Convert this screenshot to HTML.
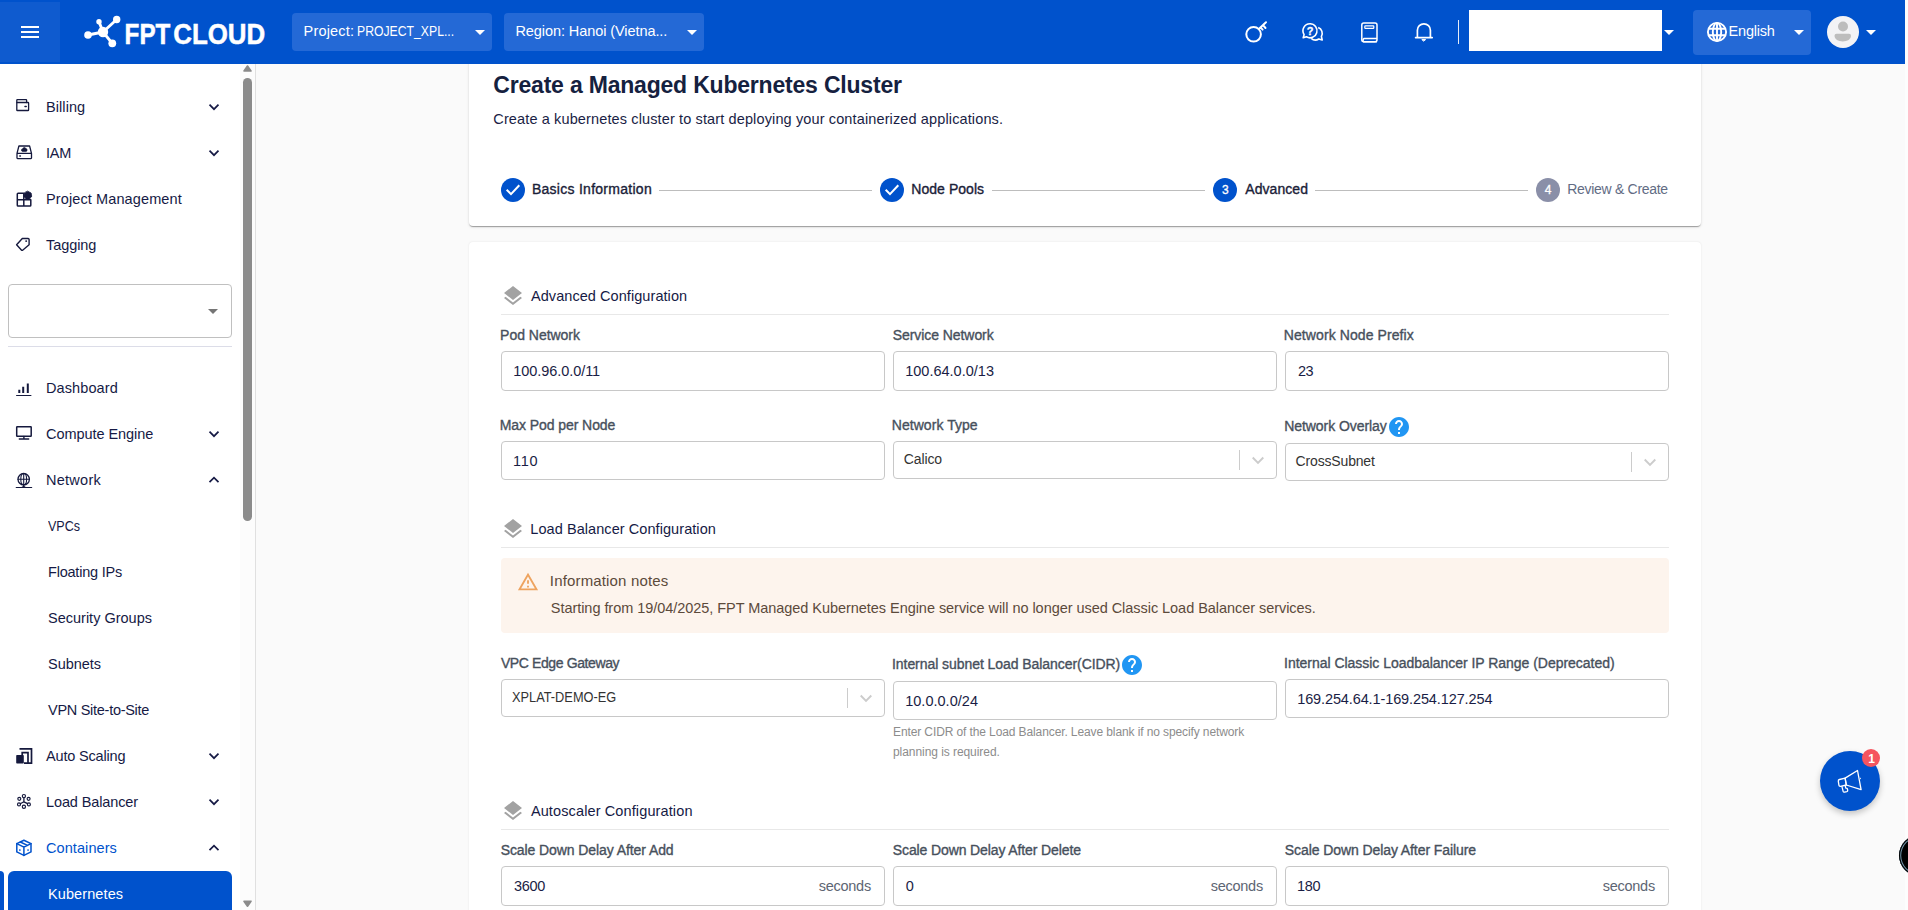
<!DOCTYPE html>
<html><head><meta charset="utf-8">
<style>
*{box-sizing:border-box;margin:0;padding:0}
html,body{width:1908px;height:910px;overflow:hidden;background:#fafafa;font-family:"Liberation Sans",sans-serif;color:#172b4d}
.abs{position:absolute}
.t{position:absolute;white-space:nowrap;line-height:1;z-index:20}
#hdr{z-index:10;position:absolute;left:0;top:0;width:1905px;height:64px;background:#0052cc}
#ham{position:absolute;left:0;top:2px;width:60px;height:60px;background:#0f5bcf}
.pill{position:absolute;top:13px;height:38px;width:200px;background:#2469d6;border-radius:4px}
.caret{position:absolute;width:0;height:0;border-left:5px solid transparent;border-right:5px solid transparent;border-top:5px solid #fff}
#side{position:absolute;left:0;top:64px;width:256px;height:846px;background:#fff;border-right:1px solid #e0e0e0}
.chev{position:absolute;left:208px;width:12px;height:12px}
.card{position:absolute;left:469px;width:1232px;background:#fff;border-radius:4px}
.inp{position:absolute;width:384px;height:40px;border:1px solid #c8c8c8;border-radius:4px;background:#fff}
.hr{position:absolute;left:501px;width:1168px;height:1px;background:#e8e8e8}
.sep{position:absolute;width:1px;height:20px;background:#ccc}
.step{position:absolute;width:24px;height:24px;border-radius:50%;top:178px}
.ln{position:absolute;top:190px;height:1px;background:#bdbdbd}
</style></head><body>
<div id="hdr">
 <div id="ham"><svg class="abs" style="left:18px;top:18px" width="24" height="24" viewBox="0 0 24 24"><path d="M3 6h18v2H3zM3 11h18v2H3zM3 16h18v2H3z" fill="#fff"/></svg></div>
 <svg class="abs" style="left:80px;top:10px" width="190" height="44" viewBox="80 10 190 44">
  <g stroke="#fff" stroke-width="2.900" stroke-linecap="round"><path d="M103 32L116.7 19.5M103 32L99 21.7M103 32L88 35M103 32L112.3 43.3"/></g>
  <g fill="#fff"><circle cx="103" cy="32" r="5.200"/><circle cx="116.7" cy="19.5" r="3.7"/><circle cx="99" cy="21.7" r="2.7"/><circle cx="88" cy="35" r="3.8"/><circle cx="112.3" cy="43.3" r="3.9"/></g>
  <text x="124.6" y="44" font-family="Liberation Sans, sans-serif" font-weight="bold" font-size="29" fill="#fff" stroke="#fff" stroke-width=".5" textLength="45.800" lengthAdjust="spacingAndGlyphs">FPT</text>
  <text x="173.2" y="44" font-family="Liberation Sans, sans-serif" font-weight="bold" font-size="29" fill="#fff" stroke="#fff" stroke-width=".5" textLength="92" lengthAdjust="spacingAndGlyphs">CLOUD</text>
 </svg>
 <div class="pill" style="left:292px"><i class="caret" style="left:183px;top:17px"></i></div>
 <div class="pill" style="left:504px"><i class="caret" style="left:183px;top:17px"></i></div>
 <!-- key -->
 <svg class="abs" style="left:1243px;top:19px" width="26" height="26" viewBox="1243 19 26 26" fill="none" stroke="#fff" stroke-width="2" stroke-linecap="round"><circle cx="1253.6" cy="34.3" r="7.3"/><path d="M1258.8 29L1266 22.3M1263 25.2L1265.5 28M1260.6 27.4L1262.6 29.6" /></svg>
 <!-- chat -->
 <svg class="abs" style="left:1300px;top:20px" width="26" height="24" viewBox="1300 20 26 24" fill="none" stroke="#fff" stroke-width="1.6" stroke-linejoin="round"><path d="M1310 23.8a7 7 0 1 1 -3.6 13l-3.2 .9l.9-3.1a7 7 0 0 1 5.9-10.8z"/><path d="M1318.2 27.6a6.2 6.2 0 0 1 3.2 8.9l.8 3.4l-3.4-.9a6.2 6.2 0 0 1-7.6-.6"/><text x="1310" y="35" text-anchor="middle" font-family="Liberation Sans, sans-serif" font-weight="bold" font-size="11" fill="#fff" stroke="#fff" stroke-width=".3">?</text></svg>
 <!-- book -->
 <svg class="abs" style="left:1359px;top:20px" width="22" height="24" viewBox="1359 20 22 24" fill="none" stroke="#fff" stroke-width="1.5" stroke-linejoin="round"><path d="M1377 38.6h-13.2a2 2 0 0 0 0 3.2h13.2"/><rect x="1361.8" y="23" width="15.2" height="18.8" rx="2"/><rect x="1364.800" y="25.800" width="9" height="2.600" rx=".6" stroke-width="1.200"/></svg>
 <!-- bell -->
 <svg class="abs" style="left:1412px;top:20px" width="24" height="24" viewBox="1412 20 24 24" fill="none" stroke="#fff" stroke-width="1.7" stroke-linejoin="round" stroke-linecap="round"><path d="M1415.6 37.6h16.6M1417.4 37.6v-7.3a6.5 6.5 0 0 1 13 0v7.3"/><path d="M1422.2 39.6h3.4l-1.7 1.3z" fill="#fff" stroke-width="1"/></svg>
 <div class="abs" style="left:1458px;top:20px;width:1px;height:24px;background:#e6ecf8"></div>
 <div class="abs" style="left:1469px;top:10px;width:193px;height:41px;background:#fff"></div>
 <i class="caret" style="left:1664px;top:30px"></i>
 <div class="abs" style="left:1693px;top:10px;width:118px;height:45px;background:#2469d6;border-radius:4px"></div>
 <svg class="abs" style="left:1706px;top:21px" width="22" height="22" viewBox="0 0 22 22" fill="none" stroke="#fff" stroke-width="1.900"><circle cx="11" cy="11" r="9.100"/><ellipse cx="11" cy="11" rx="4.200" ry="9.100"/><path d="M2.600 7.700h16.800M2.600 14.300h16.800M11 2v18"/></svg>
 <i class="caret" style="left:1794px;top:30px"></i>
 <svg class="abs" style="left:1827px;top:16px" width="32" height="32" viewBox="0 0 32 32"><circle cx="16" cy="16" r="16" fill="#f3f3f5"/><circle cx="16" cy="10.5" r="5" fill="#bdbdbd"/><path d="M7.500 19.700a2 2 0 0 1 2-2h12.500a2 2 0 0 1 2 2c0 3.500-3.700 5.700-8.250 5.700s-8.250-2.200-8.250-5.700z" fill="#bdbdbd"/></svg>
 <i class="caret" style="left:1866px;top:30px"></i>
</div>
<div id="side">
 <svg class="abs" style="left:14px;top:32px" width="20" height="18" viewBox="14 96 20 18" fill="none" stroke="#15193d" stroke-width="1.3" stroke-linejoin="round" stroke-linecap="round"><rect x="16.800" y="102.500" width="11.800" height="8" rx=".6"/><path d="M16.800 102.500v-2.300a.6.600 0 0 1 .6-.6h8.600a.6.600 0 0 1 .6.600v2.300"/><path d="M25 106.500h1.200" stroke-width="1.500"/></svg>
 <svg class="abs" style="left:14px;top:78px" width="20" height="20" viewBox="14 142 20 20" fill="none" stroke="#15193d" stroke-width="1.3" stroke-linejoin="round" stroke-linecap="round"><path d="M17 153.400L18.900 146h10.700l1.900 7.400M17 153.400h14.500v4.700a.5.500 0 0 1 -.5.500h-13.500a.5.500 0 0 1 -.5-.5z"/><path d="M22.200 151.400a1.300 1.300 0 0 1 .3-2.500a1.900 1.900 0 0 1 3.500-.3a1.500 1.500 0 0 1 .3 2.800z" fill="#15193d" stroke-width=".6"/><path d="M19.800 156h.6" stroke-width="1.400"/></svg>
 <svg class="abs" style="left:14px;top:125px" width="20" height="20" viewBox="14 189 20 20" fill="none" stroke="#15193d" stroke-width="1.3" stroke-linejoin="round" stroke-linecap="round"><path d="M23.800 193.300h-5.700a.8.800 0 0 0 -.8.800v11.100a.8.800 0 0 0 .8.800h11.900a.8.800 0 0 0 .8-.8v-5.500M23.800 193.300v12.700M17.300 199.700h13.500" stroke-width="1.500"/><path d="M27.800 191.300l3.300 1.700l.6 3.200l-2.200 2.900h-3.400l-2.200-2.900l.6-3.200z" fill="#15193d" stroke-width=".8"/></svg>
 <svg class="abs" style="left:14px;top:171px" width="20" height="18" viewBox="14 235 20 18" fill="none" stroke="#15193d" stroke-width="1.3" stroke-linejoin="round" stroke-linecap="round"><path d="M16.600 244.800L22.300 238.500h5.800a1 1 0 0 1 1 1v5.300L22.600 250.200a.7.700 0 0 1 -1 0z" stroke-width="1.400"/><path d="M26.100 241.100h.1" stroke-width="1.800"/></svg>
 <svg class="abs" style="left:14px;top:316px" width="20" height="18" viewBox="14 380 20 18" fill="none" stroke="#15193d" stroke-width="1.3" stroke-linejoin="round" stroke-linecap="round"><path d="M16.600 395.500h14.300" stroke-width="1.200"/><path d="M19.300 389.800v3.200M23.200 386.800v6.200M27.800 383.500v9.500" stroke-width="2" stroke-linecap="butt"/></svg>
 <svg class="abs" style="left:14px;top:360px" width="20" height="18" viewBox="14 424 20 18" fill="none" stroke="#15193d" stroke-width="1.3" stroke-linejoin="round" stroke-linecap="round"><rect x="16.700" y="426.800" width="14.500" height="9.500" rx=".5" stroke-width="1.500"/><path d="M23.900 436.500v2.300M19.300 439h9.400" stroke-width="1.400"/></svg>
 <svg class="abs" style="left:14px;top:407px" width="20" height="19" viewBox="14 471 20 19" fill="none" stroke="#15193d" stroke-width="1.3" stroke-linejoin="round" stroke-linecap="round"><circle cx="23.700" cy="479.200" r="5.700"/><ellipse cx="23.700" cy="479.200" rx="2.900" ry="5.700" stroke-width="1.100"/><path d="M18 479.200h11.400M23.700 473.500v14M16.200 487.500h15.500M20.400 487.500c2 0 3.300-1 3.300-2.600c0 1.600 1.300 2.600 3.300 2.600" stroke-width="1.100"/></svg>
 <svg class="abs" style="left:14px;top:682px" width="20" height="20" viewBox="14 746 20 20" fill="none" stroke="#15193d" stroke-width="1.3" stroke-linejoin="round" stroke-linecap="round"><path d="M19.5 748.9h12v14.3h-7.5M22.200 755v-2.400h5.800v10.600" stroke-width="1.700" stroke-linejoin="miter" stroke-linecap="butt"/><rect x="16.200" y="755" width="7.600" height="8.600" rx=".8" fill="#15193d" stroke="none"/></svg>
 <svg class="abs" style="left:14px;top:728px" width="20" height="19" viewBox="14 792 20 19" fill="none" stroke="#15193d" stroke-width="1.3" stroke-linejoin="round" stroke-linecap="round"><g stroke-width="1.150"><circle cx="23.900" cy="796.100" r="1.600"/><circle cx="19.300" cy="798.800" r="1.500"/><circle cx="28.600" cy="798.800" r="1.500"/><circle cx="19" cy="804.400" r="1.500"/><circle cx="28.900" cy="804.400" r="1.500"/><circle cx="23.900" cy="806.700" r="1.600"/><path d="M23.900 797.800v4M23.900 801.800L20.300 803.700M23.900 801.800L27.600 803.700" stroke-width="1.300"/></g></svg>
 <svg class="abs" style="left:14px;top:773px" width="20" height="21" viewBox="14 837 20 21" fill="none" stroke="#15193d" stroke-width="1.3" stroke-linejoin="round" stroke-linecap="round"><g stroke="#0052cc" stroke-width="1.500"><path d="M23.900 840.300L31 843.600v8.300L23.900 855.400L16.800 851.900v-8.300z"/><path d="M16.800 843.600L23.900 847.100L31 843.600M23.900 847.100v8.300M20.300 842l7.200 3.400"/><path d="M19.800 850h.1M28 850h.1" stroke-width="1.700"/></g></svg>
 <svg class="chev" style="top:37px" viewBox="0 0 12 12" fill="none" stroke="#161a45" stroke-width="1.7"><path d="M1.5 3.7L6 8.2L10.500 3.700"/></svg>
 <svg class="chev" style="top:83px" viewBox="0 0 12 12" fill="none" stroke="#161a45" stroke-width="1.7"><path d="M1.5 3.7L6 8.2L10.500 3.700"/></svg>
 <svg class="chev" style="top:364px" viewBox="0 0 12 12" fill="none" stroke="#161a45" stroke-width="1.7"><path d="M1.5 3.7L6 8.2L10.500 3.700"/></svg>
 <svg class="chev" style="top:410px" viewBox="0 0 12 12" fill="none" stroke="#161a45" stroke-width="1.7"><path d="M1.5 8.2L6 3.700L10.500 8.200"/></svg>
 <svg class="chev" style="top:686px" viewBox="0 0 12 12" fill="none" stroke="#161a45" stroke-width="1.7"><path d="M1.5 3.7L6 8.2L10.500 3.700"/></svg>
 <svg class="chev" style="top:732px" viewBox="0 0 12 12" fill="none" stroke="#161a45" stroke-width="1.7"><path d="M1.5 3.7L6 8.2L10.500 3.700"/></svg>
 <svg class="chev" style="top:778px" viewBox="0 0 12 12" fill="none" stroke="#161a45" stroke-width="1.7"><path d="M1.5 8.2L6 3.700L10.500 8.200"/></svg>
 <div class="abs" style="left:8px;top:220px;width:224px;height:54px;border:1px solid #c0c0c0;border-radius:4px"></div>
 <i class="caret" style="left:208px;top:245px;border-top-color:#757575"></i>
 <div class="abs" style="left:8px;top:282px;width:224px;height:1px;background:#dcdde8"></div>
 <div class="abs" style="left:0;top:807px;width:4px;height:60px;background:#0052cc;border-top-right-radius:4px"></div>
 <div class="abs" style="left:8px;top:807px;width:224px;height:60px;background:#0052cc;border-radius:6px 6px 0 0"></div>
 <div class="abs" style="left:240px;top:0;width:15px;height:846px;background:#fcfcfc"></div>
 <div class="abs" style="left:243px;top:14px;width:9px;height:443px;background:#8b8b8b;border-radius:4.500px"></div>
 <svg class="abs" style="left:242px;top:0px" width="11" height="10" viewBox="0 0 11 10"><path d="M2 7L5.500 2L9 7z" fill="#8b8b8b" stroke="#8b8b8b" stroke-width="1.600" stroke-linejoin="round"/></svg>
 <svg class="abs" style="left:242px;top:835px" width="11" height="10" viewBox="0 0 11 10"><path d="M2 2.200L5.500 7.200L9 2.200z" fill="#8b8b8b" stroke="#8b8b8b" stroke-width="1.600" stroke-linejoin="round"/></svg>
</div>
<div class="card" style="top:40px;height:186px;box-shadow:0 2px 1px -1px rgba(0,0,0,.2),0 1px 1px 0 rgba(0,0,0,.14),0 1px 3px 0 rgba(0,0,0,.12)"></div>
<div class="card" style="top:242px;height:700px;box-shadow:0 0 2px rgba(0,0,0,.10)"></div>
<!-- stepper -->
<div class="step" style="left:501px;background:#0052cc"><svg width="24" height="24" viewBox="0 0 24 24" fill="none" stroke="#fff" stroke-width="2"><path d="M5.700 11.700L10 16.100L18.300 7.300"/></svg></div>
<div class="ln" style="left:659px;width:213px"></div>
<div class="step" style="left:880px;background:#0052cc"><svg width="24" height="24" viewBox="0 0 24 24" fill="none" stroke="#fff" stroke-width="2"><path d="M5.700 11.700L10 16.100L18.300 7.300"/></svg></div>
<div class="ln" style="left:992px;width:213px"></div>
<div class="step" style="left:1213px;background:#0052cc"></div>
<div class="ln" style="left:1315px;width:213px"></div>
<div class="step" style="left:1536px;background:#8a8fa8"></div>
<!-- section icons -->
<svg class="abs" style="left:501px;top:284px" width="24" height="24" viewBox="0 0 24 24"><path fill="#a2a2a2" d="M11.990 18.540l-7.370-5.730L3 14.070l9 7 9-7-1.630-1.270-7.380 5.740zM12 16l7.360-5.730L21 9l-9-7-9 7 1.630 1.270L12 16z"/></svg>
<svg class="abs" style="left:501px;top:517px" width="24" height="24" viewBox="0 0 24 24"><path fill="#a2a2a2" d="M11.990 18.540l-7.370-5.730L3 14.070l9 7 9-7-1.630-1.270-7.380 5.740zM12 16l7.360-5.730L21 9l-9-7-9 7 1.630 1.270L12 16z"/></svg>
<svg class="abs" style="left:501px;top:799px" width="24" height="24" viewBox="0 0 24 24"><path fill="#a2a2a2" d="M11.990 18.540l-7.370-5.730L3 14.070l9 7 9-7-1.630-1.270-7.380 5.740zM12 16l7.360-5.730L21 9l-9-7-9 7 1.630 1.270L12 16z"/></svg>
<div class="hr" style="top:314px"></div>
<div class="hr" style="top:547px"></div>
<div class="hr" style="top:829px"></div>
<!-- row1 -->
<div class="inp" style="left:501px;top:351px"></div>
<div class="inp" style="left:893px;top:351px"></div>
<div class="inp" style="left:1285px;top:351px"></div>
<!-- row2 -->
<div class="inp" style="left:501px;top:441px;height:39px"></div>
<div class="inp" style="left:893px;top:441px;height:38px"></div>
<div class="sep" style="left:1239px;top:450px"></div>
<svg class="abs" style="left:1250px;top:453px" width="16" height="14" viewBox="0 0 16 14" fill="none" stroke="#ccc" stroke-width="1.9"><path d="M2.700 4.500L8 9.800L13.300 4.500"/></svg>
<div class="inp" style="left:1285px;top:443px;height:38px"></div>
<div class="sep" style="left:1631px;top:452px"></div>
<svg class="abs" style="left:1642px;top:455px" width="16" height="14" viewBox="0 0 16 14" fill="none" stroke="#ccc" stroke-width="1.9"><path d="M2.700 4.500L8 9.800L13.300 4.500"/></svg>
<svg class="abs" style="left:1387px;top:415px" width="24" height="24" viewBox="0 0 24 24"><path fill="#2196f3" d="M12 2C6.480 2 2 6.480 2 12s4.480 10 10 10 10-4.480 10-10S17.520 2 12 2zm1 17h-2v-2h2v2zm2.070-7.750l-.900.920C13.450 12.900 13 13.500 13 15h-2v-.500c0-1.100.450-2.100 1.170-2.830l1.240-1.260c.370-.360.590-.860.590-1.410 0-1.100-.900-2-2-2s-2 .900-2 2H8c0-2.210 1.790-4 4-4s4 1.790 4 4c0 .880-.360 1.680-.930 2.250z"/></svg>
<!-- alert -->
<div class="abs" style="left:501px;top:558px;width:1168px;height:75px;background:#fdf4ed;border-radius:4px"></div>
<svg class="abs" style="left:517px;top:571px" width="22" height="22" viewBox="0 0 24 24"><path fill="#eea35f" d="M12 5.990L19.530 19H4.470L12 5.990M12 2L1 21h22L12 2zm1 14h-2v2h2v-2zm0-6h-2v4h2v-4z"/></svg>
<!-- row3 -->
<div class="inp" style="left:501px;top:679px;height:38px"></div>
<div class="sep" style="left:847px;top:688px"></div>
<svg class="abs" style="left:858px;top:691px" width="16" height="14" viewBox="0 0 16 14" fill="none" stroke="#ccc" stroke-width="1.9"><path d="M2.700 4.500L8 9.800L13.300 4.500"/></svg>
<div class="inp" style="left:893px;top:681px;height:39px"></div>
<svg class="abs" style="left:1120px;top:653px" width="24" height="24" viewBox="0 0 24 24"><path fill="#2196f3" d="M12 2C6.480 2 2 6.480 2 12s4.480 10 10 10 10-4.480 10-10S17.520 2 12 2zm1 17h-2v-2h2v2zm2.070-7.750l-.900.920C13.450 12.900 13 13.500 13 15h-2v-.500c0-1.100.450-2.100 1.170-2.830l1.240-1.260c.370-.360.590-.860.590-1.410 0-1.100-.900-2-2-2s-2 .900-2 2H8c0-2.210 1.790-4 4-4s4 1.790 4 4c0 .880-.360 1.680-.930 2.250z"/></svg>
<div class="inp" style="left:1285px;top:679px;height:39px"></div>
<!-- row4 -->
<div class="inp" style="left:501px;top:866px"></div>
<div class="inp" style="left:893px;top:866px"></div>
<div class="inp" style="left:1285px;top:866px"></div>
<div class="abs" style="left:1905px;top:0;width:3px;height:910px;background:#fdfdfd"></div>
<!-- FAB -->
<div class="abs" style="left:1820px;top:751px;width:60px;height:60px;border-radius:50%;background:#0052cc;box-shadow:0 3px 6px rgba(0,0,0,.22)"></div>
<svg class="abs" style="left:1836px;top:768px" width="28" height="26" viewBox="0 0 28 26" fill="none" stroke="#fff" stroke-width="1.3" stroke-linejoin="round"><path d="M3.500 11.500c-.8.200-1.300.800-1.200 1.600l.6 4c.1.800.8 1.300 1.600 1.200l5.800-1.300-1.200-6.900z"/><path d="M9.100 10.100L21.500 2.500l3.600 19.200L10.300 17z"/><path d="M5.800 18.200l1.300 5c.2.700.8 1 1.500.9l2.200-.5c.7-.2 1-.8.900-1.500l-.5-1.700-1.400-.2-.6-2.800"/><path d="M24 10.500l.8-.2"/></svg>
<div class="abs" style="left:1862px;top:749px;width:18px;height:18px;border-radius:50%;background:#f5545e"></div>
<!-- edge circle -->
<div class="abs" style="left:1899px;top:834.500px;width:41px;height:41px;border-radius:50%;background:#000;box-shadow:inset 0 0 0 1.200px #000,inset 0 0 0 2.200px #6f93a8"></div>
<div class="t" style="left:303.60px;top:24px;font-size:14.5px;color:#fff;letter-spacing:0.167px">Project:</div>
<div class="t" style="left:357.16px;top:24px;font-size:14.5px;color:#fff;transform:scaleX(0.8428);transform-origin:0 0">PROJECT_XPL...</div>
<div class="t" style="left:515.40px;top:24px;font-size:14.5px;color:#fff;letter-spacing:-0.076px">Region: Hanoi (Vietna...</div>
<div class="t" style="left:1728.60px;top:24px;font-size:14.5px;color:#fff;letter-spacing:-0.215px">English</div>
<div class="t" style="left:46.00px;top:100px;font-size:14.5px;color:#161a45;letter-spacing:0.080px">Billing</div>
<div class="t" style="left:46.00px;top:146px;font-size:14.5px;color:#161a45;letter-spacing:-0.200px">IAM</div>
<div class="t" style="left:46.00px;top:192px;font-size:14.5px;color:#161a45;letter-spacing:0.114px">Project Management</div>
<div class="t" style="left:46.00px;top:238px;font-size:14.5px;color:#161a45;letter-spacing:-0.071px">Tagging</div>
<div class="t" style="left:46.00px;top:381px;font-size:14.5px;color:#161a45;letter-spacing:0.104px">Dashboard</div>
<div class="t" style="left:46.00px;top:427px;font-size:14.5px;color:#161a45;letter-spacing:-0.050px">Compute Engine</div>
<div class="t" style="left:46.00px;top:473px;font-size:14.5px;color:#161a45;letter-spacing:0.262px">Network</div>
<div class="t" style="left:48.00px;top:519px;font-size:14.5px;color:#161a45;transform:scaleX(0.8638);transform-origin:0 0">VPCs</div>
<div class="t" style="left:48.00px;top:565px;font-size:14.5px;color:#161a45;letter-spacing:-0.210px">Floating IPs</div>
<div class="t" style="left:48.00px;top:611px;font-size:14.5px;color:#161a45">Security Groups</div>
<div class="t" style="left:48.00px;top:657px;font-size:14.5px;color:#161a45;letter-spacing:-0.043px">Subnets</div>
<div class="t" style="left:48.00px;top:703px;font-size:14.5px;color:#161a45;letter-spacing:-0.280px">VPN Site-to-Site</div>
<div class="t" style="left:46.00px;top:749px;font-size:14.5px;color:#161a45;letter-spacing:-0.168px">Auto Scaling</div>
<div class="t" style="left:46.00px;top:795px;font-size:14.5px;color:#161a45;letter-spacing:-0.115px">Load Balancer</div>
<div class="t" style="left:46.00px;top:841px;font-size:14.5px;color:#0052cc;letter-spacing:0.081px">Containers</div>
<div class="t" style="left:48.00px;top:887px;font-size:14.5px;color:#fff;letter-spacing:0.098px">Kubernetes</div>
<div class="t" style="left:493.30px;top:74px;font-size:23px;color:#15213f;font-weight:bold;letter-spacing:-0.199px">Create a Managed Kubernetes Cluster</div>
<div class="t" style="left:493.30px;top:112px;font-size:14.5px;color:#1a1e45;letter-spacing:0.128px">Create a kubernetes cluster to start deploying your containerized applications.</div>
<div class="t" style="left:531.90px;top:182px;font-size:14px;color:#1a2138;letter-spacing:0.272px;-webkit-text-stroke:.35px #1a2138">Basics Information</div>
<div class="t" style="left:911.30px;top:182px;font-size:14px;color:#1a2138;letter-spacing:0.047px;-webkit-text-stroke:.35px #1a2138">Node Pools</div>
<div class="t" style="left:1245.30px;top:182px;font-size:14px;color:#1a2138;letter-spacing:0.060px;-webkit-text-stroke:.35px #1a2138">Advanced</div>
<div class="t" style="left:1567.30px;top:182px;font-size:14px;color:#626c84;letter-spacing:-0.304px">Review &amp; Create</div>
<div class="t" style="left:1222.00px;top:184px;font-size:12px;color:#fff;-webkit-text-stroke:.3px #fff">3</div>
<div class="t" style="left:1544.80px;top:184px;font-size:12px;color:#fff;-webkit-text-stroke:.3px #fff">4</div>
<div class="t" style="left:531.00px;top:289px;font-size:14.5px;color:#161a45;letter-spacing:0.062px">Advanced Configuration</div>
<div class="t" style="left:530.30px;top:522px;font-size:14.5px;color:#161a45;letter-spacing:0.068px">Load Balancer Configuration</div>
<div class="t" style="left:530.90px;top:804px;font-size:14.5px;color:#161a45;letter-spacing:0.121px">Autoscaler Configuration</div>
<div class="t" style="left:500.10px;top:328px;font-size:14px;color:#47505c;letter-spacing:-0.024px;-webkit-text-stroke:.35px #47505c">Pod Network</div>
<div class="t" style="left:892.80px;top:328px;font-size:14px;color:#47505c;letter-spacing:-0.073px;-webkit-text-stroke:.35px #47505c">Service Network</div>
<div class="t" style="left:1283.80px;top:328px;font-size:14px;color:#47505c;letter-spacing:0.085px;-webkit-text-stroke:.35px #47505c">Network Node Prefix</div>
<div class="t" style="left:499.70px;top:418px;font-size:14px;color:#47505c;letter-spacing:-0.070px;-webkit-text-stroke:.35px #47505c">Max Pod per Node</div>
<div class="t" style="left:891.80px;top:418px;font-size:14px;color:#47505c;letter-spacing:0.045px;-webkit-text-stroke:.35px #47505c">Network Type</div>
<div class="t" style="left:1284.20px;top:419px;font-size:14px;color:#47505c;letter-spacing:-0.062px;-webkit-text-stroke:.35px #47505c">Network Overlay</div>
<div class="t" style="left:500.90px;top:656px;font-size:14px;color:#47505c;letter-spacing:-0.387px;-webkit-text-stroke:.35px #47505c">VPC Edge Gateway</div>
<div class="t" style="left:892.00px;top:657px;font-size:14px;color:#47505c;letter-spacing:-0.061px;-webkit-text-stroke:.35px #47505c">Internal subnet Load Balancer(CIDR)</div>
<div class="t" style="left:1284.10px;top:656px;font-size:14px;color:#47505c;letter-spacing:-0.031px;-webkit-text-stroke:.35px #47505c">Internal Classic Loadbalancer IP Range (Deprecated)</div>
<div class="t" style="left:500.70px;top:843px;font-size:14px;color:#47505c;letter-spacing:-0.086px;-webkit-text-stroke:.35px #47505c">Scale Down Delay After Add</div>
<div class="t" style="left:892.80px;top:843px;font-size:14px;color:#47505c;letter-spacing:-0.115px;-webkit-text-stroke:.35px #47505c">Scale Down Delay After Delete</div>
<div class="t" style="left:1284.80px;top:843px;font-size:14px;color:#47505c;letter-spacing:-0.087px;-webkit-text-stroke:.35px #47505c">Scale Down Delay After Failure</div>
<div class="t" style="left:513.20px;top:364px;font-size:14.5px;color:#1a1d45;letter-spacing:-0.054px">100.96.0.0/11</div>
<div class="t" style="left:905.20px;top:364px;font-size:14.5px;color:#1a1d45;letter-spacing:0.006px">100.64.0.0/13</div>
<div class="t" style="left:1297.90px;top:364px;font-size:14.5px;color:#1a1d45;letter-spacing:-0.564px">23</div>
<div class="t" style="left:513.00px;top:454px;font-size:14.5px;color:#1a1d45;letter-spacing:0.774px">110</div>
<div class="t" style="left:903.80px;top:452px;font-size:14px;color:#333;letter-spacing:-0.123px">Calico</div>
<div class="t" style="left:1295.60px;top:454px;font-size:14px;color:#333;letter-spacing:-0.164px">CrossSubnet</div>
<div class="t" style="left:512.00px;top:690px;font-size:14px;color:#333;transform:scaleX(0.9134);transform-origin:0 0">XPLAT-DEMO-EG</div>
<div class="t" style="left:905.20px;top:694px;font-size:14.5px;color:#1a1d45;letter-spacing:0.020px">10.0.0.0/24</div>
<div class="t" style="left:1297.20px;top:692px;font-size:14.5px;color:#1a1d45;letter-spacing:-0.114px">169.254.64.1-169.254.127.254</div>
<div class="t" style="left:514.10px;top:879px;font-size:14.5px;color:#1a1d45;letter-spacing:-0.331px">3600</div>
<div class="t" style="left:905.70px;top:879px;font-size:14.5px;color:#1a1d45">0</div>
<div class="t" style="left:1297.00px;top:879px;font-size:14.5px;color:#1a1d45;letter-spacing:-0.314px">180</div>
<div class="t" style="left:818.80px;top:879px;font-size:14.5px;color:#5d6573;letter-spacing:-0.276px">seconds</div>
<div class="t" style="left:1210.80px;top:879px;font-size:14.5px;color:#5d6573;letter-spacing:-0.276px">seconds</div>
<div class="t" style="left:1602.80px;top:879px;font-size:14.5px;color:#5d6573;letter-spacing:-0.276px">seconds</div>
<div class="t" style="left:549.80px;top:573px;font-size:15px;color:#5c4a3b;letter-spacing:0.163px">Information notes</div>
<div class="t" style="left:550.80px;top:601px;font-size:14.5px;color:#5c4a3b;letter-spacing:-0.046px">Starting from 19/04/2025, FPT Managed Kubernetes Engine service will no longer used Classic Load Balancer services.</div>
<div class="t" style="left:893.00px;top:726px;font-size:12px;color:#8c8c8c;letter-spacing:-0.108px">Enter CIDR of the Load Balancer. Leave blank if no specify network</div>
<div class="t" style="left:893.00px;top:746px;font-size:12px;color:#8c8c8c;letter-spacing:-0.062px">planning is required.</div>
<div class="t" style="left:1868.20px;top:753px;font-size:12px;color:#fff;font-weight:bold">1</div>
</body></html>
